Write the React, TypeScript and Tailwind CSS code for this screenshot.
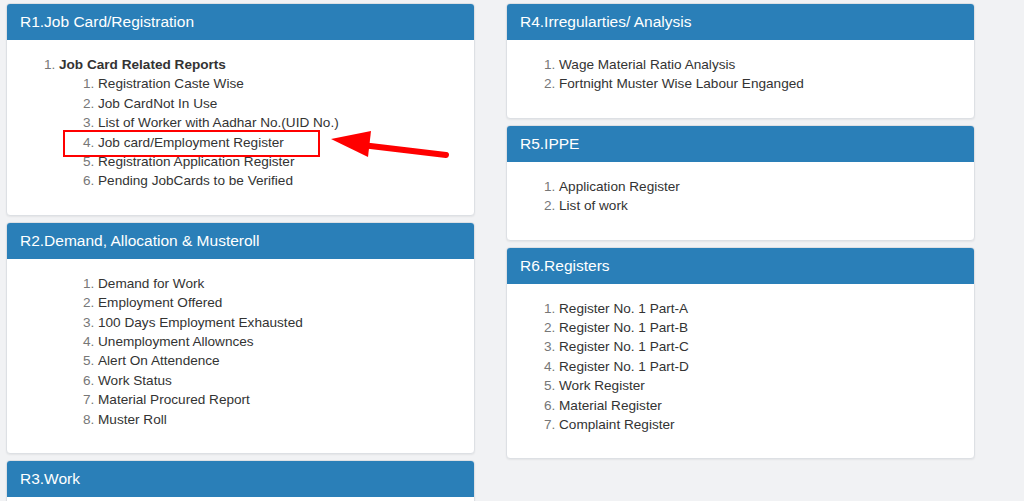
import React from 'react';

type Section = {
  title: string;
  items: string[];
  nested?: { heading: string; items: string[] };
  deep?: boolean;
};

const left: Section[] = [
  {
    title: 'R1.Job Card/Registration',
    items: [],
    nested: {
      heading: 'Job Card Related Reports',
      items: [
        'Registration Caste Wise',
        'Job CardNot In Use',
        'List of Worker with Aadhar No.(UID No.)',
        'Job card/Employment Register',
        'Registration Application Register',
        'Pending JobCards to be Verified',
      ],
    },
  },
  {
    title: 'R2.Demand, Allocation & Musteroll',
    deep: true,
    items: [
      'Demand for Work',
      'Employment Offered',
      '100 Days Employment Exhausted',
      'Unemployment Allownces',
      'Alert On Attendence',
      'Work Status',
      'Material Procured Report',
      'Muster Roll',
    ],
  },
  { title: 'R3.Work', deep: true, items: [] },
];

const right: Section[] = [
  {
    title: 'R4.Irregularties/ Analysis',
    items: ['Wage Material Ratio Analysis', 'Fortnight Muster Wise Labour Enganged'],
  },
  { title: 'R5.IPPE', items: ['Application Register', 'List of work'] },
  {
    title: 'R6.Registers',
    items: [
      'Register No. 1 Part-A',
      'Register No. 1 Part-B',
      'Register No. 1 Part-C',
      'Register No. 1 Part-D',
      'Work Register',
      'Material Register',
      'Complaint Register',
    ],
  },
];

const Panel = ({ section }: { section: Section }) => (
  <div className="rounded-[4px] border border-[#dde0e4] bg-white shadow-[0_1px_2px_rgba(0,0,0,0.06)] overflow-hidden">
    <div className="h-[36px] bg-[#2a7fb8] px-[13px] flex items-center text-white text-[15.5px]">
      {section.title}
    </div>
    <div className="px-[13px] pt-[15px] pb-[24px] text-[13.6px] leading-[19.4px] text-[#333]">
      {section.nested ? (
        <ol className="list-decimal pl-[39px] marker:text-[#777]">
          <li>
            <span className="font-bold">{section.nested.heading}</span>
            <ol className="list-decimal pl-[39px] marker:text-[#777]">
              {section.nested.items.map((it) => (
                <li key={it}>{it}</li>
              ))}
            </ol>
          </li>
        </ol>
      ) : (
        <ol className={`list-decimal marker:text-[#777] ${section.deep ? 'pl-[78px]' : 'pl-[39px]'}`}>
          {section.items.map((it) => (
            <li key={it}>{it}</li>
          ))}
        </ol>
      )}
    </div>
  </div>
);

export default function App() {
  return (
    <div
      className="relative h-[501px] overflow-hidden bg-[#f1f2f4]"
      style={{ fontFamily: '"Liberation Sans", Arial, sans-serif' }}
    >
      <div className="flex gap-[31px] pl-[6px] pt-[3px]">
        <div className="w-[469px] flex flex-col gap-[6px]">
          {left.map((s) => (
            <Panel key={s.title} section={s} />
          ))}
        </div>
        <div className="w-[469px] flex flex-col gap-[6px]">
          {right.map((s) => (
            <Panel key={s.title} section={s} />
          ))}
        </div>
      </div>

      {/* annotation: highlight box */}
      <div className="absolute left-[63px] top-[130px] w-[257px] h-[27px] border-2 border-[#f00]" />

      {/* annotation: arrow */}
      <svg className="absolute left-0 top-0 pointer-events-none" width="1024" height="501">
        <line x1="446" y1="155" x2="362" y2="145" stroke="#f00" strokeWidth="6" strokeLinecap="round" />
        <polygon points="331,139 371,131 368,157" fill="#f00" />
      </svg>
    </div>
  );
}
